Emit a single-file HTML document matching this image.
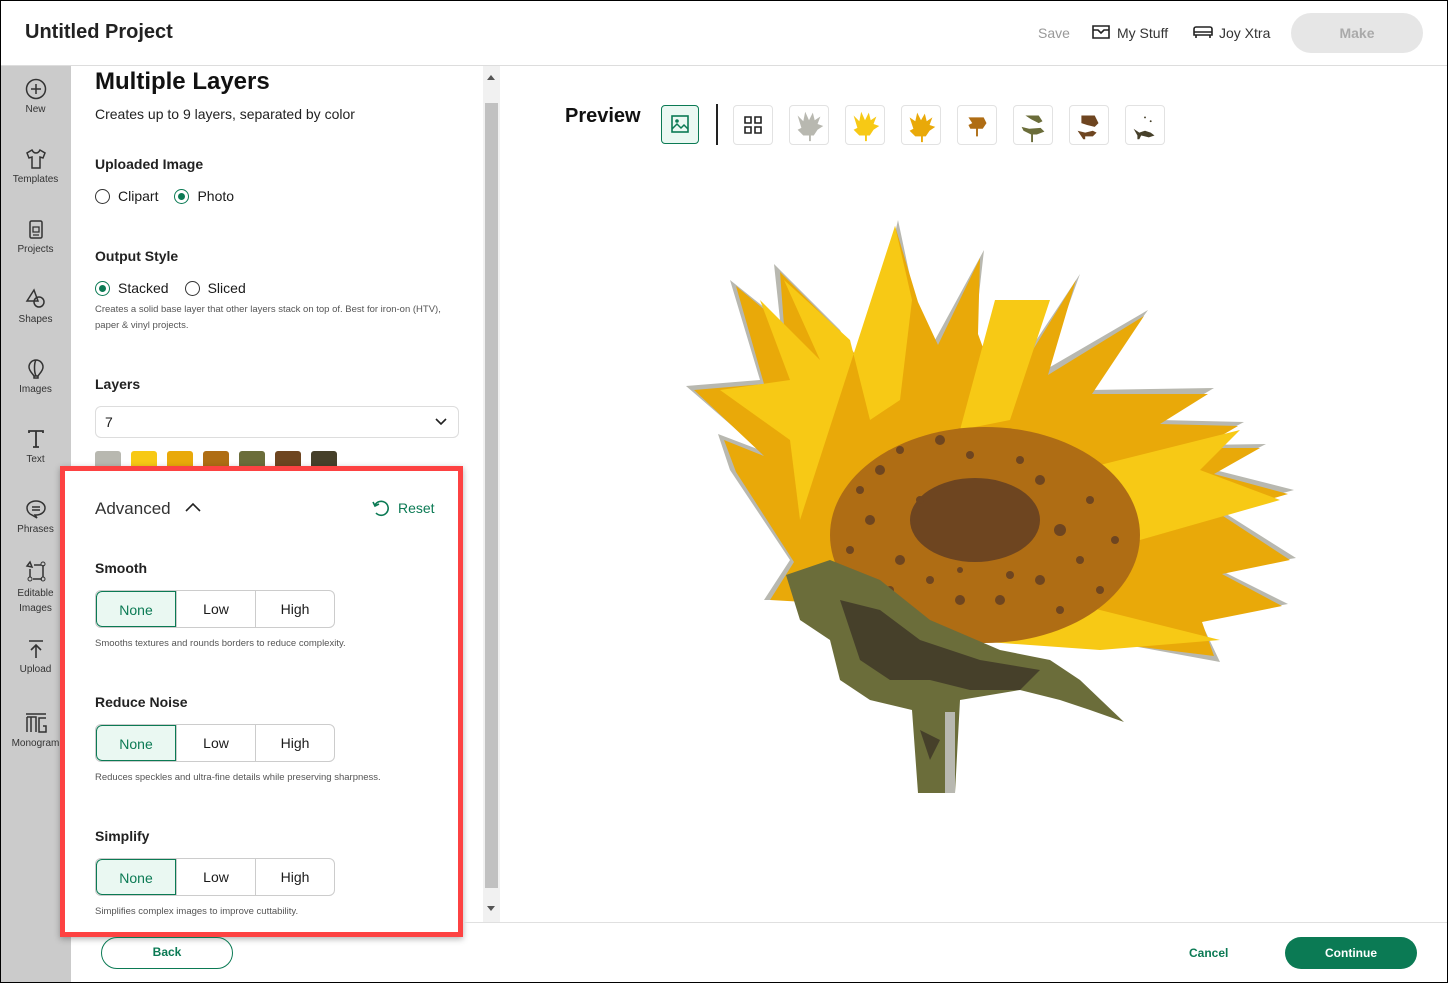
<!DOCTYPE html>
<html><head><meta charset="utf-8"><style>
*{box-sizing:border-box;margin:0;padding:0}
body{width:1448px;height:983px;overflow:hidden;font-family:"Liberation Sans",sans-serif;color:#1a1a1a;background:#fff;position:relative}
.abs{position:absolute}
.hdr{left:0;top:0;width:1448px;height:66px;border-bottom:1px solid #ddd;background:#fff}
.side{left:0;top:66px;width:71px;height:917px;background:#cbcbcb}
.si{position:absolute;left:0;width:71px;text-align:center;font-size:10px;color:#333}
.si svg{display:block;margin:0 auto 4px}
.lbl{font-size:14px;font-weight:bold;color:#222}
.small{font-size:9.5px;color:#555;line-height:16px}
.radio{display:inline-block;width:15px;height:15px;border:1.5px solid #333;border-radius:50%;vertical-align:-3px;margin-right:8px;position:relative}
.radio.on{border-color:#0b7a54}
.radio.on:after{content:"";position:absolute;left:2.5px;top:2.5px;width:7px;height:7px;border-radius:50%;background:#0b7a54}
.seg{position:absolute;left:95px;width:240px;height:38px;display:flex;border:1px solid #ccc;border-radius:6px;overflow:hidden}
.seg div{flex:1;text-align:center;line-height:36px;font-size:14px;border-left:1px solid #ccc}
.seg div:first-child{border:1px solid #0b7a54;background:#eaf8f2;color:#0b7a54;border-radius:6px 0 0 6px}
.th{position:absolute;top:105px;width:40px;height:40px;border:1px solid #e2e2e2;border-radius:4px;background:#fff}
</style></head><body>
<div class="abs hdr"></div>
<div class="abs" style="left:25px;top:21px;font-size:20px;font-weight:bold;color:#222">Untitled Project</div>
<div class="abs" style="left:1038px;top:25px;font-size:14px;color:#999">Save</div>
<svg class="abs" style="left:1091px;top:24px" width="20" height="16" viewBox="0 0 20 16"><path d="M2 2h16v12H2z M2 6l5 0 3 3 3-3 5 0" fill="none" stroke="#222" stroke-width="1.6"/></svg>
<div class="abs" style="left:1117px;top:25px;font-size:14px;color:#333">My Stuff</div>
<svg class="abs" style="left:1193px;top:25px" width="20" height="14" viewBox="0 0 20 14"><path d="M3 2h14a2 2 0 012 2v6H1V4a2 2 0 012-2z M1 7h18 M3 10v3 M17 10v3" fill="none" stroke="#222" stroke-width="1.6"/></svg>
<div class="abs" style="left:1219px;top:25px;font-size:14px;color:#333">Joy Xtra</div>
<div class="abs" style="left:1291px;top:13px;width:132px;height:40px;border-radius:20px;background:#e6e6e6;color:#aaa;font-size:14px;font-weight:bold;text-align:center;line-height:40px">Make</div>

<div class="abs side"></div>
<div class="si" style="top:78px"><svg width="22" height="22" viewBox="0 0 22 22"><circle cx="11" cy="11" r="9.5" fill="none" stroke="#333" stroke-width="1.5"/><path d="M11 6v10M6 11h10" stroke="#333" stroke-width="1.5"/></svg>New</div>
<div class="si" style="top:148px"><svg width="22" height="22" viewBox="0 0 22 22"><path d="M7 2l-5 3 2 5 3-1v11h8V9l3 1 2-5-5-3c-1 2-2 3-4 3s-3-1-4-3z" fill="none" stroke="#333" stroke-width="1.5"/></svg>Templates</div>
<div class="si" style="top:218px"><svg width="22" height="22" viewBox="0 0 22 22"><rect x="5" y="3" width="12" height="17" rx="1.5" fill="none" stroke="#333" stroke-width="1.5"/><path d="M8 9h6v5H8z M8 17h6" fill="none" stroke="#333" stroke-width="1.3"/></svg>Projects</div>
<div class="si" style="top:288px"><svg width="22" height="22" viewBox="0 0 22 22"><path d="M9 2L2 13h11z" fill="none" stroke="#333" stroke-width="1.5"/><circle cx="14" cy="14" r="5" fill="none" stroke="#333" stroke-width="1.5"/></svg>Shapes</div>
<div class="si" style="top:358px"><svg width="22" height="22" viewBox="0 0 22 22"><path d="M11 2a7 7 0 00-7 7c0 4 4 7 5 9h4c1-2 5-5 5-9a7 7 0 00-7-7z M9 18v2h4v-2 M11 2c-2 3-2 12 0 16" fill="none" stroke="#333" stroke-width="1.5"/></svg>Images</div>
<div class="si" style="top:428px"><svg width="22" height="22" viewBox="0 0 22 22"><path d="M4 5V3h14v2 M11 3v16 M8 19h6" fill="none" stroke="#333" stroke-width="1.8"/></svg>Text</div>
<div class="si" style="top:498px"><svg width="22" height="22" viewBox="0 0 22 22"><path d="M11 3c5 0 9 3 9 7s-4 7-9 7l-1 0 2 3-5-3c-3-1-5-4-5-7 0-4 4-7 9-7z M7 9h8 M7 12h8" fill="none" stroke="#333" stroke-width="1.5"/></svg>Phrases</div>
<div class="si" style="top:560px;line-height:15px"><svg width="22" height="22" viewBox="0 0 22 22"><path d="M5 2l2 5-5-1z M8 19h9 M18 5v12 M5 9v8 M9 5h7" fill="none" stroke="#333" stroke-width="1.5"/><circle cx="18" cy="4" r="2" fill="none" stroke="#333"/><circle cx="18" cy="19" r="2" fill="none" stroke="#333"/><circle cx="5" cy="19" r="2" fill="none" stroke="#333"/></svg>Editable<br>Images</div>
<div class="si" style="top:638px"><svg width="22" height="22" viewBox="0 0 22 22"><path d="M4 3h14 M11 20V7 M6 12l5-5 5 5" fill="none" stroke="#333" stroke-width="1.6"/></svg>Upload</div>
<div class="si" style="top:712px"><svg width="24" height="22" viewBox="0 0 24 22"><path d="M2 2h20 M3 5v15 M3 5h9v15 M7 5v15 M22 6h-7v14h7v-6h-3" fill="none" stroke="#333" stroke-width="1.5"/></svg>Monogram</div>

<!-- left panel -->
<div class="abs" style="left:95px;top:68px;font-size:24px;font-weight:bold;color:#111">Multiple Layers</div>
<div class="abs" style="left:95px;top:106px;font-size:14px;color:#222">Creates up to 9 layers, separated by color</div>
<div class="abs lbl" style="left:95px;top:156px">Uploaded Image</div>
<div class="abs" style="left:95px;top:188px;font-size:14px"><span class="radio"></span>Clipart<span style="display:inline-block;width:16px"></span><span class="radio on"></span>Photo</div>
<div class="abs lbl" style="left:95px;top:248px">Output Style</div>
<div class="abs" style="left:95px;top:280px;font-size:14px"><span class="radio on"></span>Stacked<span style="display:inline-block;width:16px"></span><span class="radio"></span>Sliced</div>
<div class="abs small" style="left:95px;top:302px;width:360px">Creates a solid base layer that other layers stack on top of. Best for iron-on (HTV), paper &amp; vinyl projects.</div>
<div class="abs lbl" style="left:95px;top:376px">Layers</div>
<div class="abs" style="left:95px;top:406px;width:364px;height:32px;border:1px solid #ddd;border-radius:6px;font-size:14px;padding:7px 9px">7</div>
<svg class="abs" style="left:435px;top:418px" width="12" height="8" viewBox="0 0 12 8"><path d="M1 1l5 5 5-5" fill="none" stroke="#222" stroke-width="1.6"/></svg>
<div class="abs" style="left:95px;top:451px;display:flex;gap:10px">
<div style="width:26px;height:20px;background:#b8b8b0;border-radius:3px"></div>
<div style="width:26px;height:20px;background:#f7c915;border-radius:3px"></div>
<div style="width:26px;height:20px;background:#e9a909;border-radius:3px"></div>
<div style="width:26px;height:20px;background:#af6d14;border-radius:3px"></div>
<div style="width:26px;height:20px;background:#6b6d3a;border-radius:3px"></div>
<div style="width:26px;height:20px;background:#6e4520;border-radius:3px"></div>
<div style="width:26px;height:20px;background:#46402a;border-radius:3px"></div>
</div>
<!-- scrollbar -->
<div class="abs" style="left:483px;top:66px;width:17px;height:856px;background:#f1f1f1"></div>
<div class="abs" style="left:485px;top:103px;width:13px;height:785px;background:#c1c1c1"></div>
<div class="abs" style="left:487px;top:71px;width:0;height:0;border:4px solid transparent;border-bottom:5px solid #555"></div>
<div class="abs" style="left:487px;top:906px;width:0;height:0;border:4px solid transparent;border-top:5px solid #555"></div>

<!-- advanced box -->
<div class="abs" style="left:60px;top:466px;width:403px;height:471px;border:5px solid #fd4242;background:#fff;box-shadow:0 2px 6px rgba(0,0,0,.3)"></div>
<div class="abs" style="left:95px;top:499px;font-size:17px;color:#333">Advanced</div>
<svg class="abs" style="left:185px;top:502px" width="16" height="10" viewBox="0 0 16 10"><path d="M1 9l7-7 7 7" fill="none" stroke="#222" stroke-width="1.6"/></svg>
<svg class="abs" style="left:371px;top:499px" width="20" height="18" viewBox="0 0 20 18"><path d="M4 6a7 7 0 11 1 8 M2 3l2 4 4-2" fill="none" stroke="#0b7a54" stroke-width="1.6"/></svg>
<div class="abs" style="left:398px;top:500px;font-size:14px;color:#0b7a54">Reset</div>
<div class="abs lbl" style="left:95px;top:560px">Smooth</div>
<div class="seg" style="top:590px"><div>None</div><div>Low</div><div>High</div></div>
<div class="abs small" style="left:95px;top:636px">Smooths textures and rounds borders to reduce complexity.</div>
<div class="abs lbl" style="left:95px;top:694px">Reduce Noise</div>
<div class="seg" style="top:724px"><div>None</div><div>Low</div><div>High</div></div>
<div class="abs small" style="left:95px;top:770px">Reduces speckles and ultra-fine details while preserving sharpness.</div>
<div class="abs lbl" style="left:95px;top:828px">Simplify</div>
<div class="seg" style="top:858px"><div>None</div><div>Low</div><div>High</div></div>
<div class="abs small" style="left:95px;top:904px">Simplifies complex images to improve cuttability.</div>

<!-- bottom -->
<div class="abs" style="left:463px;top:922px;width:985px;height:1px;background:#e0e0e0"></div>
<div class="abs" style="left:101px;top:937px;width:132px;height:32px;border:1.5px solid #0b7a54;border-radius:16px;text-align:center;line-height:29px;font-size:12px;font-weight:bold;color:#0b7a54">Back</div>
<div class="abs" style="left:1189px;top:946px;font-size:12px;font-weight:bold;color:#0b7a54">Cancel</div>
<div class="abs" style="left:1285px;top:937px;width:132px;height:32px;background:#0b7a54;border-radius:16px;text-align:center;line-height:32px;font-size:12px;font-weight:bold;color:#fff">Continue</div>

<!-- preview -->
<div class="abs" style="left:565px;top:105px;font-size:20px;font-weight:bold;color:#111">Preview</div>
<div class="th" style="left:661px;top:105px;width:38px;height:39px;border:1.5px solid #0b7a54;background:#eaf8f2"></div>
<svg class="abs" style="left:671px;top:115px" width="18" height="18" viewBox="0 0 18 18"><rect x="1" y="1" width="16" height="16" fill="none" stroke="#0b7a54" stroke-width="1.6"/><circle cx="6" cy="6" r="1.8" fill="#0b7a54"/><path d="M1 14l5-5 4 4 3-3 4 4" fill="none" stroke="#0b7a54" stroke-width="1.5"/></svg>
<div class="abs" style="left:716px;top:104px;width:2px;height:41px;background:#222"></div>
<div class="th" style="left:733px"></div>
<svg class="abs" style="left:744px;top:116px" width="18" height="18" viewBox="0 0 18 18"><path d="M1 1h6v6H1zM11 1h6v6h-6zM1 11h6v6H1zM11 11h6v6h-6z" fill="none" stroke="#222" stroke-width="1.6"/></svg>
<div class="th" style="left:789px"><svg width="38" height="38" viewBox="0 0 40 40"><path d="M8 10l6 6 2-10 4 9 4-8 2 8 6-4-3 8 6 2-6 4-4 6h-3v6h-2v-6h-6l-6-6 4-2z" fill="#b8b8b0"/></svg></div>
<div class="th" style="left:845px"><svg width="38" height="38" viewBox="0 0 40 40"><path d="M8 10l6 6 2-10 4 9 4-8 2 8 6-4-3 8 6 2-6 4-4 6h-3v6h-2v-6h-6l-6-6 4-2z" fill="#f7c915"/></svg></div>
<div class="th" style="left:901px"><svg width="38" height="38" viewBox="0 0 40 40"><path d="M8 12l6 4 2-9 4 8 4-7 2 8 6-4-3 8 6 2-6 4-4 6h-3v6h-2v-6h-6l-6-6 4-2z" fill="#e9a909"/></svg></div>
<div class="th" style="left:957px"><svg width="38" height="38" viewBox="0 0 40 40"><path d="M11 12h16l3 6-4 6h-5v8h-2v-8h-6l-2-4 4-2z" fill="#af6d14"/></svg></div>
<div class="th" style="left:1013px"><svg width="38" height="38" viewBox="0 0 40 40"><path d="M12 10h14l4 6-4 2-8-4zM8 22l8 2 12-1 4 4-8 3h-4v8h-2v-8l-8-4z" fill="#6b6d3a"/></svg></div>
<div class="th" style="left:1069px"><svg width="38" height="38" viewBox="0 0 40 40"><path d="M12 10h14l4 8-4 4-8-2-6-2zM8 26l8 2 8-2 4 2-4 4h-8v3h-2z" fill="#6e4520"/></svg></div>
<div class="th" style="left:1125px"><svg width="38" height="38" viewBox="0 0 40 40"><path d="M8 24l6 4 6-2 6 2 4 3-6 2-8-2-2 4h-2v-4z" fill="#46402a"/><circle cx="20" cy="12" r="1" fill="#46402a"/><circle cx="26" cy="16" r="1" fill="#46402a"/></svg></div>

<!-- sunflower -->
<svg class="abs" style="left:680px;top:210px" width="620" height="590" viewBox="680 210 620 590">
<path d="M898,220 L915,300 L935,340 L984,250 L975,330 L1000,395 L1080,274 L1045,370 L1148,310 L1090,390 L1214,388 L1160,420 L1244,422 L1200,445 L1266,444 L1215,470 L1294,490 L1220,510 L1296,558 L1220,570 L1288,604 L1200,620 L1220,662 L1100,640 L950,640 L840,600 L764,600 L790,560 L730,470 L718,434 L760,450 L686,386 L760,380 L730,280 L780,320 L774,264 L840,330 L880,398 L880,300 Z" fill="#b8b8b0"/>
<path d="M895,226 L918,302 L938,345 L980,258 L978,334 L1002,400 L1076,280 L1048,375 L1144,316 L1092,394 L1208,394 L1160,424 L1238,426 L1200,448 L1260,448 L1214,474 L1288,494 L1220,514 L1290,560 L1222,574 L1282,606 L1202,622 L1214,656 L1100,642 L950,642 L840,604 L770,600 L794,562 L736,472 L724,440 L764,456 L694,390 L764,384 L736,286 L784,326 L780,272 L844,336 L884,404 L884,304 Z" fill="#e9a909"/>
<path d="M895,226 L912,300 L900,400 L870,420 L850,340 L784,280 L820,360 L760,300 L790,380 L720,390 L790,440 L800,520 Z M960,430 L995,300 L1050,300 L1010,420 Z M1080,470 L1240,430 L1200,470 L1280,500 L1140,540 Z M920,600 L1060,600 L1220,640 L1100,650 L960,640 Z" fill="#f7c915"/>
<ellipse cx="985" cy="535" rx="155" ry="108" fill="#af6d14"/>
<ellipse cx="975" cy="520" rx="65" ry="42" fill="#6e4520"/>
<g fill="#6e4520"><circle cx="880" cy="470" r="5"/><circle cx="900" cy="450" r="4"/><circle cx="940" cy="440" r="5"/><circle cx="1040" cy="480" r="5"/><circle cx="1060" cy="530" r="6"/><circle cx="1040" cy="580" r="5"/><circle cx="900" cy="560" r="5"/><circle cx="870" cy="520" r="5"/><circle cx="960" cy="600" r="5"/><circle cx="1000" cy="600" r="5"/><circle cx="920" cy="500" r="4"/><circle cx="1080" cy="560" r="4"/>
<circle cx="860" cy="490" r="4"/><circle cx="890" cy="590" r="4"/><circle cx="930" cy="580" r="4"/><circle cx="1020" cy="460" r="4"/><circle cx="1090" cy="500" r="4"/><circle cx="1100" cy="590" r="4"/><circle cx="1060" cy="610" r="4"/><circle cx="970" cy="455" r="4"/><circle cx="1010" cy="575" r="4"/><circle cx="850" cy="550" r="4"/><circle cx="1115" cy="540" r="4"/><circle cx="960" cy="570" r="3"/></g>
<path d="M786,575 L830,560 L880,580 L930,620 L1000,650 L1050,660 L1080,680 L1124,722 L1090,710 L1060,700 L1020,690 L960,700 L955,793 L918,793 L912,710 L870,700 L840,680 L830,640 L800,620 Z" fill="#6b6d3a"/>
<path d="M840,600 L880,610 L920,640 L980,660 L1040,670 L1020,690 L970,690 L930,680 L890,680 L860,660 L850,630 Z M920,730 L940,740 L930,760 Z" fill="#46402a"/>
<path d="M945,712 L955,712 L955,793 L945,793 Z" fill="#b8b8b0"/>
</svg>
<div class="abs" style="left:0;top:0;width:1448px;height:983px;border:1px solid #000;pointer-events:none"></div>
</body></html>
